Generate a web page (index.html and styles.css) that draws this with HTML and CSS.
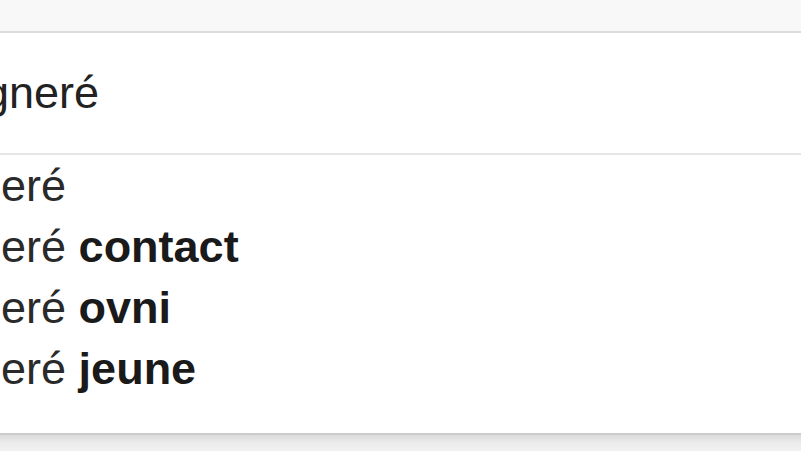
FILE: index.html
```html
<!DOCTYPE html>
<html lang="fr">
<head>
  <meta charset="UTF-8" />
  <title>Recherche</title>
  <link rel="stylesheet" href="styles.css">
</head>
<body>
  <div class="topbar"></div>

  <div class="suggest-box">
    <div class="query">gneré</div>
    <ul class="suggestions">
      <li>gneré</li>
      <li>gneré <b>contact</b></li>
      <li>gneré <b>ovni</b></li>
      <li>gneré <b>jeune</b></li>
    </ul>
  </div>

  <div class="below"></div>
</body>
</html>
```

FILE: styles.css
```css
* { margin: 0; padding: 0; box-sizing: border-box; }
body {
  font-family: 'Liberation Sans', Arial, sans-serif;
  background: #fff;
  color: #222;
  width: 801px;
  height: 451px;
  overflow: hidden;
  display: flex;
  flex-direction: column;
}
.topbar {
  flex: none;
  height: 33px;
  background-color: #f8f8f8;
  border-bottom: 2px solid #dcdcdc;
}
.suggest-box {
  flex: none;
  background: #fff;
  border-bottom: 2px solid #cbcbcb;
}
.query {
  height: 122px;
  line-height: 120px;
  font-size: 45px;
  margin-left: -16px;
  white-space: nowrap;
  border-bottom: 2px solid #e6e6e6;
}
.suggestions {
  list-style: none;
  padding-bottom: 34px;
}
.suggestions li {
  font-size: 45px;
  line-height: 61px;
  margin-left: -49px;
  white-space: nowrap;
  color: #2a2a2a;
}
.suggestions b {
  color: #1a1a1a;
}
.below {
  flex: 1;
  background: linear-gradient(to bottom, #dadada, #ececec 50%, #f1f1f1);
}
```
